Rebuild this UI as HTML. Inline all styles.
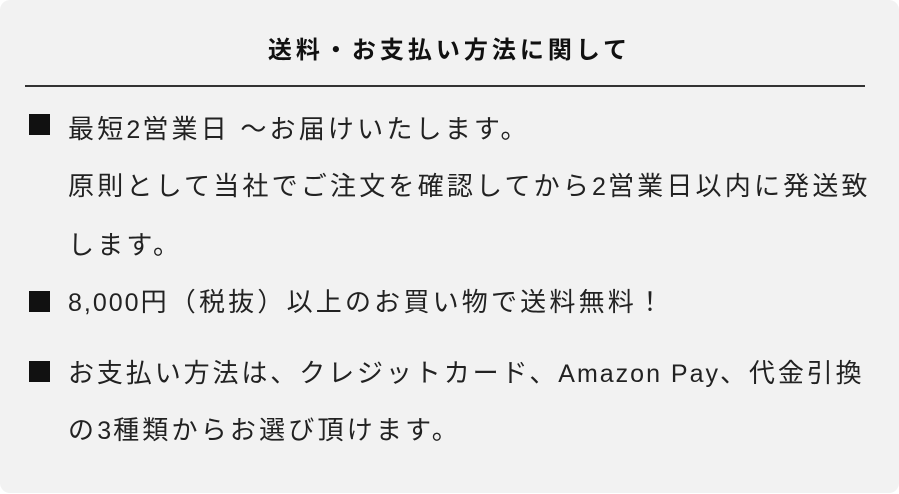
<!DOCTYPE html>
<html><head><meta charset="utf-8"><style>
html,body{margin:0;padding:0;background:#fff;}
.box{position:absolute;left:0;top:0;width:899px;height:493px;background:#f2f2f2;border-radius:10px;}
.t{position:absolute;left:0;width:899px;text-align:center;top:35px;font:bold 24px/32px "Liberation Sans","Noto Sans CJK JP",sans-serif;letter-spacing:4px;color:#111;}
.hr{position:absolute;left:25px;width:840px;top:85px;height:2px;background:#333;}
.l{position:absolute;left:68px;white-space:nowrap;font:26px/32px "Liberation Sans","Noto Sans CJK JP",sans-serif;letter-spacing:3.2px;color:#222;}
.e{letter-spacing:2px;font-size:25px;}
.b{position:absolute;left:29px;width:21px;height:21px;background:#111;}
</style></head><body>
<div class="box">
<div class="t">送料・お支払い方法に関して</div>
<div class="hr"></div>
<div class="b" style="top:114px"></div>
<div class="l" style="top:113px">最短<span class="e">2</span>営業日 ～お届けいたします。</div>
<div class="l" style="top:170px">原則として当社でご注文を確認してから<span class="e">2</span>営業日以内に発送致</div>
<div class="l" style="top:229px">します。</div>
<div class="b" style="top:291px"></div>
<div class="l" style="top:286px"><span class="e">8,000</span>円（税抜）以上のお買い物で送料無料！</div>
<div class="b" style="top:361px"></div>
<div class="l" style="top:357px;letter-spacing:2.9px">お支払い方法は、クレジットカード、<span class="e">Amazon Pay</span>、代金引換</div>
<div class="l" style="top:414px">の<span class="e">3</span>種類からお選び頂けます。</div>
</div>
</body></html>
